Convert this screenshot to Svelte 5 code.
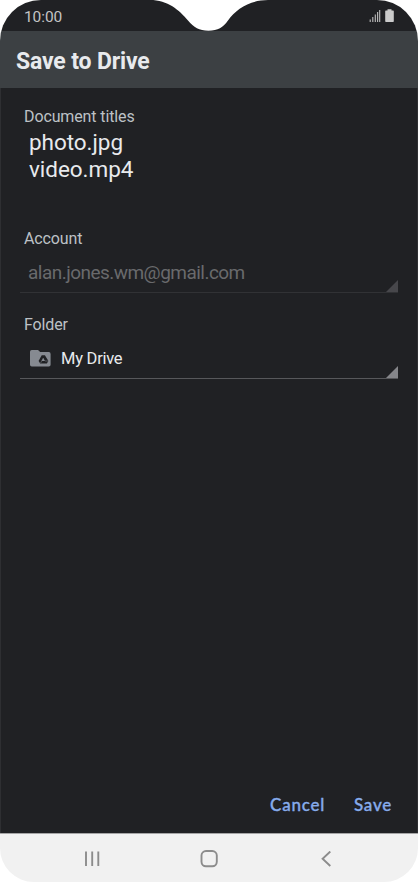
<script>
  let titles = ['photo.jpg', 'video.mp4'];
  let account = 'alan.jones.wm@gmail.com';
  let folder = 'My Drive';
</script>

<div class="phone">
  <div class="statusbar">
    <span class="clock">10:00</span>
    <svg class="notch" width="120" height="31" viewBox="0 0 120 31">
      <path d="M0 0C18 0 29 10 38 20.500C44 27.500 49 30.700 58.500 30.700C68 30.700 73 27.500 78 20.500C86 9 100 0 118 0Z" fill="#fff" />
    </svg>
    <svg class="status-icons" width="26" height="14" viewBox="0 0 26 14">
      <path d="M1.200 10.500V13M3.800 8V13M6.300 5.500V13M8.600 3V13M10.700 1V13" stroke="#bdbdbd" stroke-width="1.100" />
      <path d="M18.500.2h4v1.400h1.600q.7 0 .7.700v10q0 .7-.7.700h-7.200q-.7 0-.7-.7V2.300q0-.7.7-.7h1.600z" fill="#cbcbcb" />
    </svg>
  </div>

  <header>Save to Drive</header>

  <main>
    <div class="label">Document titles</div>
    <div class="titles">
      {#each titles as title}
        <div>{title}</div>
      {/each}
    </div>

    <div class="label account-label">Account</div>
    <div class="select disabled">
      <span>{account}</span>
      <svg class="corner" width="12" height="12" viewBox="0 0 12 12"><path d="M12 0V12H0Z" /></svg>
    </div>

    <div class="label folder-label">Folder</div>
    <div class="select folder">
      <svg class="folder-icon" width="21" height="17" viewBox="0 0 21 17">
        <path d="M1.800 0H8l2.200 2.100h8.600q1.800 0 1.800 1.800v10.800q0 1.800-1.800 1.800H1.800Q0 16.500 0 14.700V1.800Q0 0 1.800 0Z" fill="#868a91" />
        <path d="M11.700 5.200h3.200l3.500 5.800-1.600 2.500H10.200L8.600 11Z" fill="#202124" />
        <path d="M13.300 8l1.700 3h-3.400Z" fill="#868a91" />
        <path d="M13.300 8l-2.700 5M15 11h3" stroke="#868a91" stroke-width=".5" />
      </svg>
      <span>{folder}</span>
      <svg class="corner" width="12" height="12" viewBox="0 0 12 12"><path d="M12 0V12H0Z" /></svg>
    </div>

    <div class="actions">
      <button>Cancel</button>
      <button>Save</button>
    </div>
  </main>

  <nav>
    <svg width="16" height="16" viewBox="0 0 16 16">
      <path d="M2 .5V15M8.200 .5V15M14.300 .5V15" />
    </svg>
    <svg width="18" height="18" viewBox="0 0 18 18">
      <rect x="1.500" y="1" width="15.300" height="15.300" rx="4.500" />
    </svg>
    <svg width="16" height="16" viewBox="0 0 16 16">
      <path d="M12.300 .5L4.600 7.700L12.300 15" />
    </svg>
  </nav>
</div>

<style>
  :global(body) {
    background: #fff;
  }

  .phone {
    width: 418px;
    height: 882px;
    display: flex;
    flex-direction: column;
    overflow: hidden;
    border-radius: 41px 41px 34px 34px;
    color: #e8eaed;
    font-family: Roboto, sans-serif;
  }

  .statusbar {
    height: 31px;
    flex-shrink: 0;
    display: grid;
    grid-template-columns: 150px 120px 1fr;
    background: #202124;
  }

  .clock {
    padding-left: 24px;
    font-size: 15.500px;
    letter-spacing: -0.1px;
    line-height: 34px;
    color: #c4c4c4;
  }

  .status-icons {
    justify-self: end;
    margin: 9px 23px 0 0;
  }

  header {
    height: 57px;
    flex-shrink: 0;
    box-sizing: border-box;
    padding-left: 16px;
    background: #3c4043;
    font-size: 23px;
    font-weight: 700;
    letter-spacing: -0.15px;
    line-height: 61px;
  }

  main {
    flex: 1;
    display: flex;
    flex-direction: column;
    padding: 18px 20px 0 20px;
    background: #202124;
    box-shadow: inset 1px 0 #2e2f32, inset -1px 0 #2e2f32;
  }

  .label {
    height: 20px;
    padding-left: 4px;
    font-size: 16px;
    letter-spacing: -0.12px;
    line-height: 22px;
    color: #bdc1c6;
  }

  .titles {
    padding: 3px 0 0 9px;
    font-size: 22.500px;
    letter-spacing: -0.05px;
    line-height: 27px;
  }

  .account-label {
    margin-top: 45px;
  }

  .folder-label {
    margin-top: 21px;
  }

  .select {
    height: 45px;
    box-sizing: border-box;
    display: flex;
    align-items: center;
    padding: 5px 0 0 8px;
    border-bottom: 1px solid #57585b;
    font-size: 16.500px;
    letter-spacing: -0.25px;
  }

  .disabled {
    border-color: #313235;
    font-size: 19px;
    letter-spacing: -0.53px;
    color: #696a6c;
  }

  .corner {
    margin-left: auto;
    align-self: flex-end;
    fill: #85868a;
  }

  .disabled .corner {
    fill: #47474b;
  }

  .folder {
    padding-left: 10px;
  }

  .folder-icon {
    margin-right: 10px;
  }

  .actions {
    margin-top: auto;
    display: flex;
    justify-content: flex-end;
    gap: 29px;
    padding: 0 6px 18px 0;
  }

  button {
    padding: 0;
    border: 0;
    background: none;
    font-family: Lato, sans-serif;
    font-size: 17px;
    font-weight: 500;
    line-height: 20px;
    letter-spacing: 0.75px;
    color: #86abeb;
    -webkit-text-stroke: 0.35px #86abeb;
  }

  nav {
    height: 49px;
    flex-shrink: 0;
    box-sizing: border-box;
    display: flex;
    justify-content: center;
    align-items: center;
    gap: 100px;
    padding-top: 1px;
    border-top: 1px solid #a5a5a6;
    background: #f1f1f1;
  }

  nav svg {
    fill: none;
    stroke: #8c8c8c;
    stroke-width: 1.900;
  }
</style>
